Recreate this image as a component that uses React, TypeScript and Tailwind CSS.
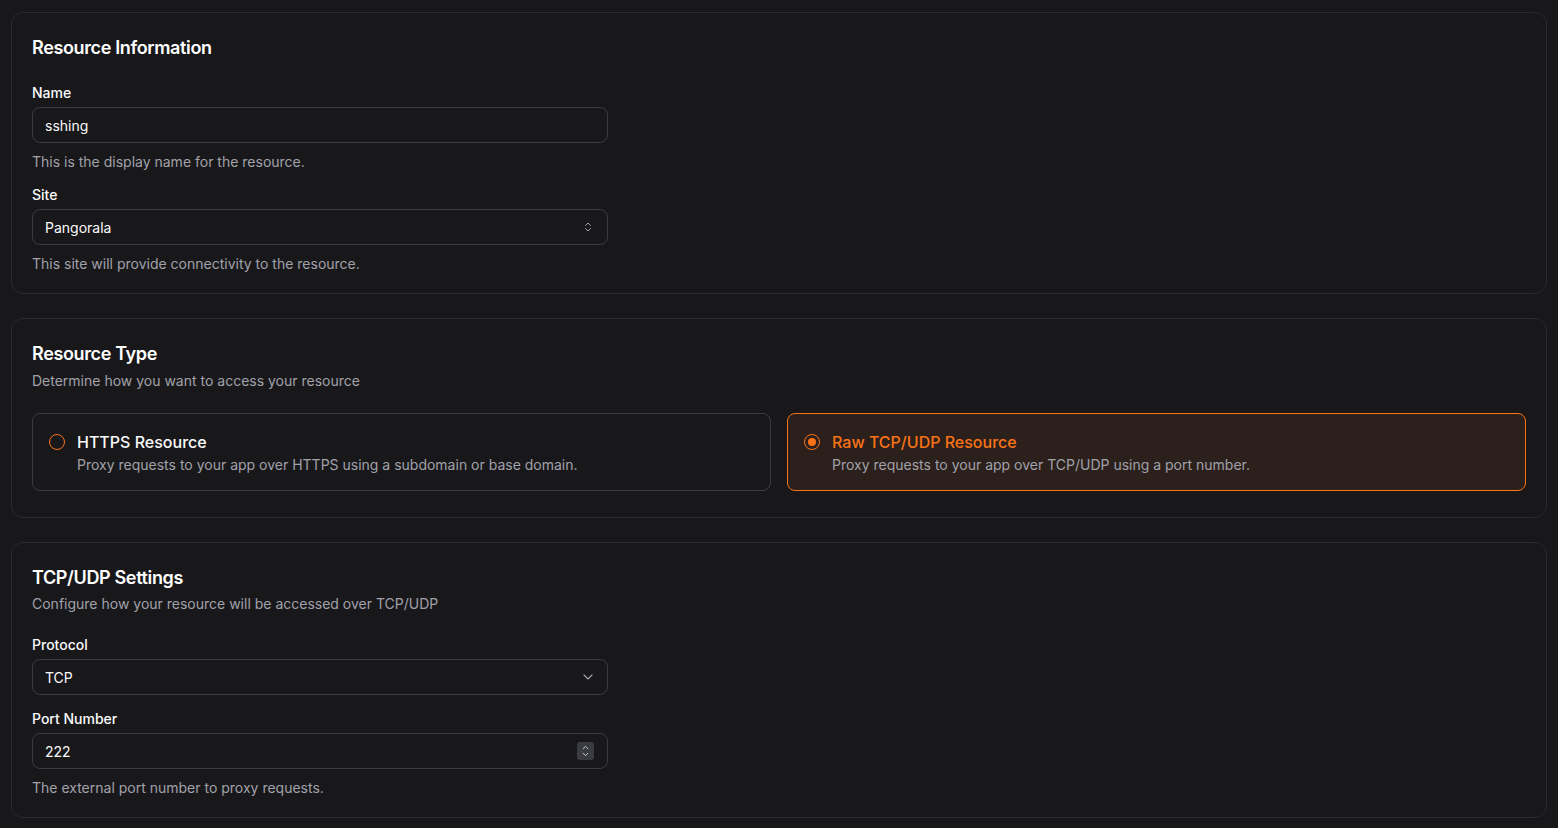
import { ChevronDown, ChevronsUpDown, ChevronUp } from 'lucide-react';

const font = { fontFamily: 'Inter, "Noto Sans", sans-serif' };

function Card({ children }: { children: React.ReactNode }) {
  return (
    <section className="rounded-xl border border-[#2b2b30] bg-[#18181b] px-5 pt-[21px] pb-[19px]">
      {children}
    </section>
  );
}

function Title({ children }: { children: React.ReactNode }) {
  return <h2 className="text-lg font-semibold leading-7 tracking-[-0.02em] text-white">{children}</h2>;
}

function Label({ children }: { children: React.ReactNode }) {
  return <div className="mb-[7px] text-sm font-medium leading-none text-[#fafafa]">{children}</div>;
}

function Hint({ children }: { children: React.ReactNode }) {
  return <p className="mt-[9px] text-sm leading-5 text-[#a1a1aa]">{children}</p>;
}

function Field({ children }: { children: React.ReactNode }) {
  return (
    <div className="flex h-9 w-full max-w-xl items-center rounded-lg border border-[#3a3a3f] bg-[#18181b] pt-px pl-3 pr-[13px] text-sm text-[#fafafa]">
      {children}
    </div>
  );
}

function Option({ title, desc, active }: { title: string; desc: string; active?: boolean }) {
  return (
    <div
      className={
        'flex gap-3 rounded-lg border px-4 pt-[18px] pb-[15px] ' +
        (active ? 'border-[#f97316] bg-[#2c201c]' : 'border-[#3a3a3f] bg-[#18181b]')
      }
    >
      <div className="mt-[2px] flex h-4 w-4 shrink-0 items-center justify-center rounded-full border border-[#f97316]">
        {active && <div className="h-2 w-2 rounded-full bg-[#f97316]" />}
      </div>
      <div className="flex flex-col gap-[3px]">
        <div className={'text-base font-medium leading-5 ' + (active ? 'text-[#f97316]' : 'text-[#fafafa]')}>{title}</div>
        <div className="text-sm leading-5 text-[#a1a1aa]">{desc}</div>
      </div>
    </div>
  );
}

export default function App() {
  return (
    <div className="min-h-screen bg-[#18181b] px-[11px] pt-3 pb-3" style={font}>
      <div className="flex flex-col gap-6">
        <Card>
          <Title>Resource Information</Title>
          <div className="mt-6 flex flex-col">
            <Label>Name</Label>
            <Field>sshing</Field>
            <Hint>This is the display name for the resource.</Hint>
            <div className="mt-4">
              <Label>Site</Label>
            </div>
            <Field>
              <span className="flex-1">Pangorala</span>
              <ChevronsUpDown className="-mt-px h-3 w-3 text-[#a1a1aa]" strokeWidth={2} />
            </Field>
            <Hint>This site will provide connectivity to the resource.</Hint>
          </div>
        </Card>

        <Card>
          <Title>Resource Type</Title>
          <p className="mt-[3px] text-sm leading-5 text-[#a1a1aa]">Determine how you want to access your resource</p>
          <div className="mt-[22px] mb-[7px] grid grid-cols-2 gap-4">
            <Option title="HTTPS Resource" desc="Proxy requests to your app over HTTPS using a subdomain or base domain." />
            <Option
              active
              title="Raw TCP/UDP Resource"
              desc="Proxy requests to your app over TCP/UDP using a port number."
            />
          </div>
        </Card>

        <Card>
          <Title>TCP/UDP Settings</Title>
          <p className="mt-[2px] text-sm leading-5 text-[#a1a1aa]">Configure how your resource will be accessed over TCP/UDP</p>
          <div className="mt-6 flex flex-col">
            <Label>Protocol</Label>
            <Field>
              <span className="flex-1">TCP</span>
              <ChevronDown className="-mr-[2px] -mt-px h-4 w-4 text-[#a1a1aa]" strokeWidth={1.75} />
            </Field>
            <div className="mt-[17px]">
              <Label>Port Number</Label>
            </div>
            <Field>
              <span className="flex-1">222</span>
              <div className="-mt-px flex h-[18px] w-[17px] flex-col items-center justify-center rounded-[3px] bg-[#3b3b42] text-[#d4d4d8]">
                <ChevronUp className="-mb-[1px] h-[9px] w-[9px]" strokeWidth={2.5} />
                <ChevronDown className="-mt-[1px] h-[9px] w-[9px]" strokeWidth={2.5} />
              </div>
            </Field>
            <Hint>The external port number to proxy requests.</Hint>
          </div>
        </Card>
      </div>
    </div>
  );
}
